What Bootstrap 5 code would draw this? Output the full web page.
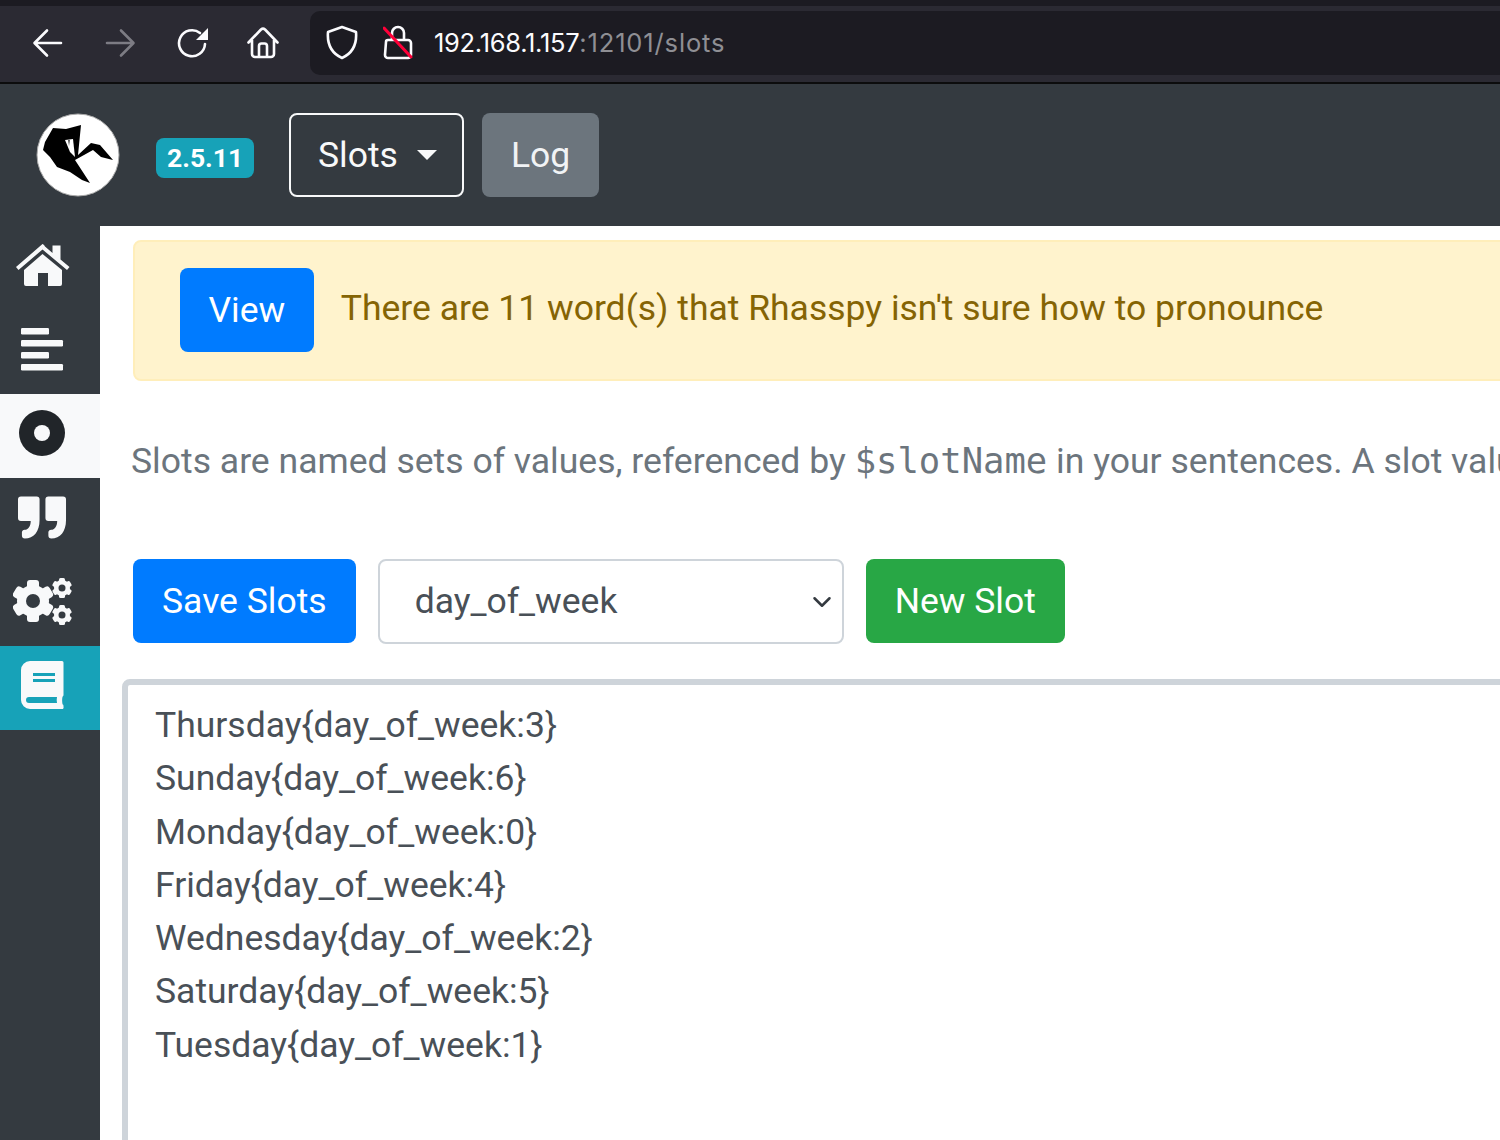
<!DOCTYPE html>
<html lang="en"><head><meta charset="utf-8"><title>Slots</title>
<link href="https://cdn.jsdelivr.net/npm/bootstrap@5.3.0/dist/css/bootstrap.min.css" rel="stylesheet">
<style>
html,body{height:1140px;overflow:hidden}
body{width:1500px;font-family:Roboto,"Liberation Sans",sans-serif;font-size:35.5px;color:#495057;background:#fff}
.chrome{height:84px;background:#2b2a33;border-top:6px solid #1c1b22;border-bottom:2px solid #0c0c0d;padding-left:30px}
.chrome-icon{flex:none;display:block}
.urlbar{flex:1;height:64px;margin-left:29px;margin-top:-2px;background:#1c1b22;border-radius:10px 0 0 10px;padding-left:16px;font-family:Inter,Roboto,sans-serif;font-size:25.5px;color:#fbfbfe;white-space:nowrap}
.urlbar .dim{color:#8f8f94;letter-spacing:.85px}
.urltext{margin-left:21px;letter-spacing:-.3px}
.topbar{height:142px;background:#343a40;padding-left:36px}
.rlogo{width:84px;height:84px;flex:none}
.vbadge{font-size:26.5px;font-weight:700;line-height:1;padding:7px 11px;margin-left:36px;margin-top:6px;background:#17a2b8;color:#fff;border-radius:8px;height:40px;width:98px}
.bigbtn{font-size:35.5px;line-height:48px;padding:17px 29px;border-radius:8px;font-family:Roboto,sans-serif}
.slotsbtn{margin-left:35px;border:2px solid #f8f9fa;color:#f8f9fa;background:transparent;padding:16px 25px 16px 27px;height:84px}
.slotsbtn.dropdown-toggle::after{margin-left:19px;vertical-align:7px;border-top:10px solid;border-right:10px solid transparent;border-left:10px solid transparent;border-bottom:0}
.logbtn{margin-left:18px;background:#6c757d;border:0;color:#f1f3f5;height:84px;padding:18px 29px}
.lower{height:914px}
.sidebar{width:100px;flex:none;background:#343a40}
.sideitem{height:84px;width:100px;display:flex;align-items:center}
.sideitem svg{margin-top:-6px}
.sideitem.lightitem{background:#f8f9fa}
.sideitem.tealitem{background:#17a2b8}
.mainpane{flex:1;min-width:0;padding:14px 0 0 33px;overflow:hidden}
.warnbox{width:1500px;height:141px;background:#fff3cd;border:2px solid #ffeeba;border-radius:8px;padding:26px 0 0 45px;color:#856404;margin:0}
.warnbox span{margin-left:27px;font-size:35.5px;position:relative;top:1px}
.blue{background:#007bff;border:0;color:#fff;height:84px}
.viewbtn{padding-left:28.5px;padding-right:28.5px}
.intro{width:1369px;margin:56px 0 0 -2px;font-size:35.55px;line-height:48px;white-space:nowrap;overflow:hidden;color:#6c757d}
.intro code{font-family:"DejaVu Sans Mono","Liberation Mono",monospace;font-size:35.55px;color:#6c757d}
.toolrow{margin-top:74px;height:84px}
.slotselect{width:466px;height:85px;margin-left:22px;font-size:35.5px;color:#495057;padding:0 30px 0 35px;border:2px solid #ced4da;border-radius:8px;background-color:#fff;background-position:right 7px center;background-size:26px 20px}
.greenbtn{margin-left:22px;background:#28a745;border:0;color:#fff;height:84px}
.slotarea{width:1500px;height:520px;margin:36px 0 0 -11px;display:block;border:6px solid #ced4da;border-radius:8px;padding:14px 0 0 27px;font-size:35.5px;line-height:53.3px;color:#495057;background:#fff;resize:none;overflow:hidden;font-family:Roboto,sans-serif}
</style></head>
<body>
<div class="chrome d-flex align-items-center">
  <svg class="chrome-icon" width="36" height="36" viewBox="0 0 36 36" fill="none" stroke="#fbfbfe" stroke-width="2.6" stroke-linecap="round" stroke-linejoin="round"><path d="M31 17H5M17 4.500 4.500 17 17 29.500"/></svg>
  <svg class="chrome-icon" style="margin-left:36px" width="36" height="36" viewBox="0 0 36 36" fill="none" stroke="#7d7c84" stroke-width="2.6" stroke-linecap="round" stroke-linejoin="round"><path d="M5 17H31M19 4.500 31.500 17 19 29.500"/></svg>
  <svg class="chrome-icon" style="margin-left:37px" width="36" height="36" viewBox="0 0 36 36" fill="none" stroke="#fbfbfe" stroke-width="2.600" stroke-linecap="round"><path d="M30 18a13 13 0 1 1-5-11"/><path d="M33 2v12H21z" fill="#fbfbfe" stroke="none"/></svg>
  <svg class="chrome-icon" style="margin-left:34px" width="36" height="36" viewBox="0 0 36 36" fill="none" stroke="#fbfbfe" stroke-width="2.600" stroke-linecap="round" stroke-linejoin="round"><path d="M3.500 16.500 16 3.500a3 3 0 0 1 4 0l12.500 13M7 14v14a3 3 0 0 0 3 3h16a3 3 0 0 0 3-3V14M14 31V20a2.500 2.500 0 0 1 2.500-2.500h3A2.500 2.500 0 0 1 22 20v11"/></svg>
  <div class="urlbar d-flex align-items-center">
    <svg class="chrome-icon" width="32" height="36" viewBox="0 0 32 36" fill="none" stroke="#fbfbfe" stroke-width="2.600" stroke-linejoin="round"><path d="M16 2 30 7c1 12-3 21-14 26C5 28 1 19 2 7z"/></svg>
    <svg class="chrome-icon" style="margin-left:25px" width="30" height="36" viewBox="0 0 30 36" fill="none" stroke-linecap="round"><path d="M3 17a2 2 0 0 1 2-2h20a3 3 0 0 1 3 3v12a3 3 0 0 1-3 3H5a3 3 0 0 1-3-3zM9 15V8a6 6 0 0 1 12 0v7" stroke="#fbfbfe" stroke-width="2.600"/><path d="M1 3 28 32" stroke="#ff0039" stroke-width="3"/></svg>
    <span class="urltext">192.168.1.157<span class="dim">:12101/slots</span></span>
  </div>
</div>
<nav class="topbar d-flex align-items-center">
  <svg class="rlogo" viewBox="0 0 84 84" role="img" aria-label="Rhasspy logo"><defs><filter id="soft" x="-5%" y="-5%" width="110%" height="110%"><feGaussianBlur stdDeviation=".6"/></filter></defs><circle cx="42" cy="42" r="41" fill="#fff" stroke="#aaa" stroke-width="1"/><path filter="url(#soft)" fill="#000" d="M7 37 9 29 17 15 30 16 45 12 42 42 55 30 64 32 77 47 65 44 57 37 39 47 54 70 46 67 34 59 21 54 14 44Z"/><path filter="url(#soft)" fill="#fff" d="M29 27 37 26 39 44 34 39Z"/><path filter="url(#soft)" fill="#555" d="M32 27l1 6 1-6z"/></svg>
  <span class="badge vbadge">2.5.11</span>
  <div class="dropdown"><button class="btn bigbtn slotsbtn dropdown-toggle" type="button">Slots</button></div>
  <button class="btn bigbtn logbtn" type="button">Log</button>
</nav>
<div class="lower d-flex">
  <aside class="sidebar">
    <div class="sideitem" style="padding-left:15px"><svg width="56" height="44" viewBox="0 0 56 44" fill="#f8f9fa"><path d="M27.500 1 1 24l2.500 3L27.500 6.500 52 27l2.500-3-9-7.500V2.500h-8v7.500L30 3.500C29 1 27 1 27.500 1Z"/><path d="M9 27 27.500 11 47 27v14a2 2 0 0 1-2 2H33V30h-10v13H11a2 2 0 0 1-2-2Z"/></svg></div>
    <div class="sideitem" style="padding-left:21px"><svg width="44" height="44" viewBox="0 0 44 44" fill="#f8f9fa"><rect y="1" width="28" height="6.500" rx="1.200"/><rect y="13" width="42" height="6.500" rx="1.200"/><rect y="25" width="28" height="6.500" rx="1.200"/><rect y="37" width="42" height="6.500" rx="1.200"/></svg></div>
    <div class="sideitem lightitem" style="padding-left:19px"><svg width="46" height="46" viewBox="0 0 46 46"><circle cx="23" cy="23" r="23" fill="#212529"/><circle cx="23" cy="23" r="8" fill="#f8f9fa"/></svg></div>
    <div class="sideitem" style="padding-left:18px"><svg width="49" height="44" viewBox="0 0 50 44" fill="#f8f9fa"><path d="M3 1H19a3 3 0 0 1 3 3V25C22 37 16 44 7 44a3 3 0 0 1-3-3v-4a3 3 0 0 1 3-2c3 0 6-3 6-9H3a3 3 0 0 1-3-3V4a3 3 0 0 1 3-3Z"/><path d="M31 1H46a3 3 0 0 1 3 3V25C49 37 43 44 34 44a3 3 0 0 1-3-3v-4a3 3 0 0 1 3-2c3 0 6-3 6-9H31a3 3 0 0 1-3-3V4a3 3 0 0 1 3-3Z"/></svg></div>
    <div class="sideitem" style="padding-left:13px"><svg width="60" height="48" viewBox="0 0 60 48" fill="#f8f9fa"><circle cx="20" cy="24" r="16"/><rect x="14" y="3" width="12" height="42" rx="3"/><rect x="14" y="3" width="12" height="42" rx="3" transform="rotate(60 20 24)"/><rect x="14" y="3" width="12" height="42" rx="3" transform="rotate(120 20 24)"/><circle cx="20" cy="24" r="7" fill="#343a40"/><circle cx="49" cy="11" r="8"/><rect x="46" y="1" width="6" height="20" rx="1.500"/><rect x="46" y="1" width="6" height="20" rx="1.500" transform="rotate(60 49 11)"/><rect x="46" y="1" width="6" height="20" rx="1.500" transform="rotate(120 49 11)"/><circle cx="49" cy="11" r="3.500" fill="#343a40"/><circle cx="49" cy="38" r="8"/><rect x="46" y="28" width="6" height="20" rx="1.500"/><rect x="46" y="28" width="6" height="20" rx="1.500" transform="rotate(60 49 38)"/><rect x="46" y="28" width="6" height="20" rx="1.500" transform="rotate(120 49 38)"/><circle cx="49" cy="38" r="3.500" fill="#343a40"/></svg></div>
    <div class="sideitem tealitem" style="padding-left:21px"><svg width="43" height="48" viewBox="0 0 43 48"><path fill="#f8f9fa" d="M9 0H41a1.500 1.500 0 0 1 1.500 1.500V34a2 2 0 0 1-1 1.700c-.5 2-.5 5 0 7.500a2 2 0 0 1 1 1.500v1.300A1.500 1.500 0 0 1 41 48H9a9 9 0 0 1-9-9V9a9 9 0 0 1 9-9Z"/><path fill="#17a2b8" d="M12 12h22v3H12zM12 18h22v3H12zM8 36h28c-.4 2-.4 4 0 6H8a3 3 0 0 1 0-6Z"/></svg></div>
  </aside>
  <main class="mainpane">
    <div class="alert warnbox" role="alert"><button class="btn bigbtn blue viewbtn" type="button">View</button><span>There are 11 word(s) that Rhasspy isn't sure how to pronounce</span></div>
    <p class="intro mb-0">Slots are named sets of values, referenced by <code>$slotName</code> in your sentences. A slot value</p>
    <div class="toolrow d-flex align-items-start">
      <button class="btn bigbtn blue" type="button">Save Slots</button>
      <select class="form-select slotselect" aria-label="Slot"><option>day_of_week</option></select>
      <button class="btn bigbtn greenbtn" type="button">New Slot</button>
    </div>
    <textarea class="slotarea" aria-label="Slot values">Thursday{day_of_week:3}
Sunday{day_of_week:6}
Monday{day_of_week:0}
Friday{day_of_week:4}
Wednesday{day_of_week:2}
Saturday{day_of_week:5}
Tuesday{day_of_week:1}</textarea>
  </main>
</div>
<script src="https://cdn.jsdelivr.net/npm/bootstrap@5.3.0/dist/js/bootstrap.bundle.min.js"></script>
</body></html>
